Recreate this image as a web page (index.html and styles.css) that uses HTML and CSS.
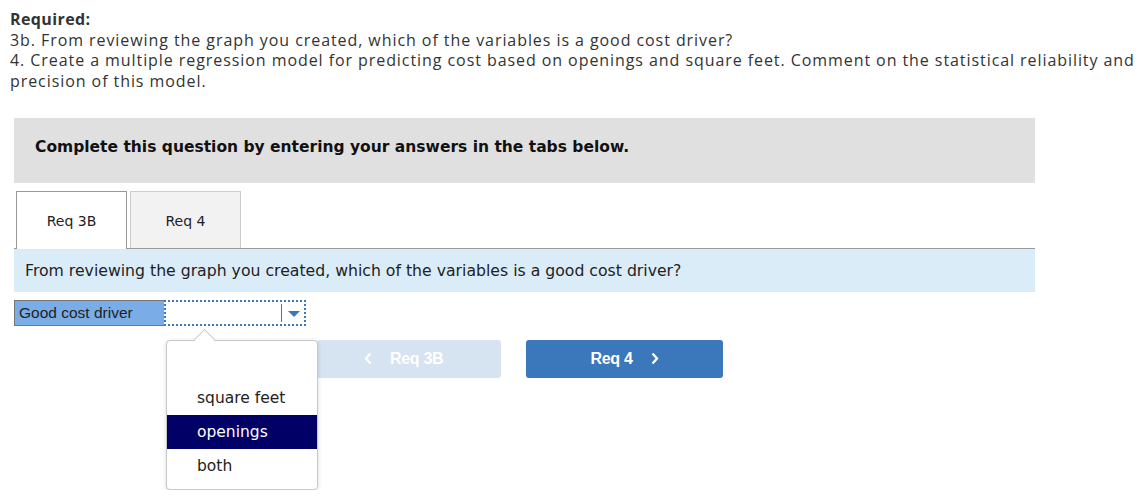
FILE: index.html
```html
<!DOCTYPE html>
<html lang="en">
<head>
  <meta charset="UTF-8" />
  <title>Required</title>
  <link rel="stylesheet" href="styles.css">
</head>
<body>
  <div class="required">
    <div class="required-title">Required:</div>
    <div>3b. From reviewing the graph you created, which of the variables is a good cost driver?</div>
    <div>4. Create a multiple regression model for predicting cost based on openings and square feet. Comment on the statistical reliability and precision of this model.</div>
  </div>

  <div class="question">
    <div class="instructions">Complete this question by entering your answers in the tabs below.</div>

    <div class="tabs">
      <div class="tab active">Req 3B</div>
      <div class="tab">Req 4</div>
    </div>

    <div class="prompt">From reviewing the graph you created, which of the variables is a good cost driver?</div>

    <div class="answer-row">
      <div class="answer-label">Good cost driver</div>
      <div class="select">
        <span class="select-arrow"></span>
      </div>
    </div>

    <div class="lower">
      <div class="menu">
        <div class="menu-item"></div>
        <div class="menu-item">square feet</div>
        <div class="menu-item selected">openings</div>
        <div class="menu-item">both</div>
      </div>
      <div class="nav">
        <button class="nav-btn prev">
          <svg class="chev" width="8" height="13" viewBox="0 0 8 13"><path d="M6.5 1.5 2 6.5l4.5 5" fill="none" stroke="#fff" stroke-width="2.3"/></svg>
          <span>Req 3B</span>
        </button>
        <button class="nav-btn next">
          <span>Req 4</span>
          <svg class="chev" width="8" height="13" viewBox="0 0 8 13"><path d="M1.5 1.5 6 6.5l-4.5 5" fill="none" stroke="#fff" stroke-width="2.3"/></svg>
        </button>
      </div>
    </div>
  </div>
</body>
</html>
```
FILE: styles.css
```css
body {
  margin: 0;
  padding: 9px 0 0 0;
  background: #fff;
  font-family: "Open Sans", Arial, sans-serif;
  color: #333;
}
.required {
  padding-left: 10px;
  width: 1130px;
  font-size: 16px;
  letter-spacing: 0.93px;
  line-height: 20.7px;
}
.required-title {
  font-weight: 700;
  letter-spacing: 0.4px;
}
.question {
  width: 1021px;
  margin: 26px 0 0 14px;
}
.instructions {
  background: #e0e0e0;
  height: 65px;
  box-sizing: border-box;
  padding: 0 0 7px 21px;
  display: flex;
  align-items: center;
  font-family: "DejaVu Sans", Verdana, sans-serif;
  font-weight: bold;
  font-size: 15.5px;
  color: #111;
}
.tabs {
  display: flex;
  gap: 3px;
  margin-top: 8px;
  padding-left: 2px;
  border-bottom: 1px solid #999;
}
.tab {
  width: 111px;
  height: 57px;
  display: flex;
  align-items: center;
  justify-content: center;
  padding-top: 2px;
  box-sizing: border-box;
  border: 1px solid #ccc;
  border-bottom: none;
  background: #f2f2f2;
  font-family: "DejaVu Sans", Verdana, sans-serif;
  font-size: 14px;
  color: #222;
}
.tab.active {
  background: #fff;
  border-color: #999;
  height: 58px;
  margin-bottom: -1px;
}
.prompt {
  background: #dbecf9;
  height: 43px;
  padding-left: 11px;
  display: flex;
  align-items: center;
  font-family: "DejaVu Sans", Verdana, sans-serif;
  font-size: 15.7px;
  color: #222;
}
.answer-row {
  display: flex;
  margin-top: 8px;
  height: 26px;
}
.answer-label {
  width: 145px;
  background: #7aace6;
  border-left: 1px solid #777;
  border-bottom: 1px solid #777;
  border-top: 1px solid #777;
  padding-left: 4px;
  font-family: "Liberation Sans", Arial, sans-serif;
  font-size: 15.5px;
  line-height: 24px;
  color: #222;
}
.select {
  width: 138px;
  border: 2px dotted #3a77bb;
  background: #fff;
  position: relative;
}
.select-arrow {
  position: absolute;
  right: 0;
  top: 2px;
  bottom: 2px;
  width: 22px;
  border-left: 1px solid #3a77bb;
}
.select-arrow::after {
  content: "";
  position: absolute;
  left: 6px;
  top: 7px;
  border-left: 6px solid transparent;
  border-right: 6px solid transparent;
  border-top: 6px solid #3a77bb;
}
.lower {
  display: flex;
  margin-top: 14px;
}
.menu {
  margin-left: 152px;
  width: 150px;
  height: 148px;
  border: 1px solid #c8c8c8;
  border-radius: 4px;
  background: #fff;
  box-shadow: 0 1px 4px rgba(0,0,0,0.15);
  position: relative;
  z-index: 2;
  font-family: "DejaVu Sans", Verdana, sans-serif;
  font-size: 15.5px;
  color: #222;
}
.menu::before {
  content: "";
  position: absolute;
  left: 30px;
  top: -9px;
  width: 14px;
  height: 14px;
  background: #fff;
  border-left: 1px solid #c8c8c8;
  border-top: 1px solid #c8c8c8;
  transform: rotate(45deg);
}
.menu-item {
  height: 34px;
  line-height: 34px;
  padding-left: 30px;
}
.menu-item:first-child {
  height: 40px;
}
.menu-item.selected {
  background: #000066;
  color: #fff;
}
.nav {
  display: flex;
  gap: 25px;
  margin-left: -1px;
}
.nav-btn {
  height: 38px;
  border: none;
  border-radius: 3px;
  display: flex;
  align-items: center;
  justify-content: center;
  gap: 18px;
  font-family: "Liberation Sans", Arial, sans-serif;
  font-weight: bold;
  font-size: 16px;
  letter-spacing: -0.3px;
  color: #fff;
}
.prev {
  width: 184px;
  background: #d6e3f1;
  padding-left: 47px;
  justify-content: flex-start;
}
.next {
  width: 197px;
  background: #3a77bb;
}
```
